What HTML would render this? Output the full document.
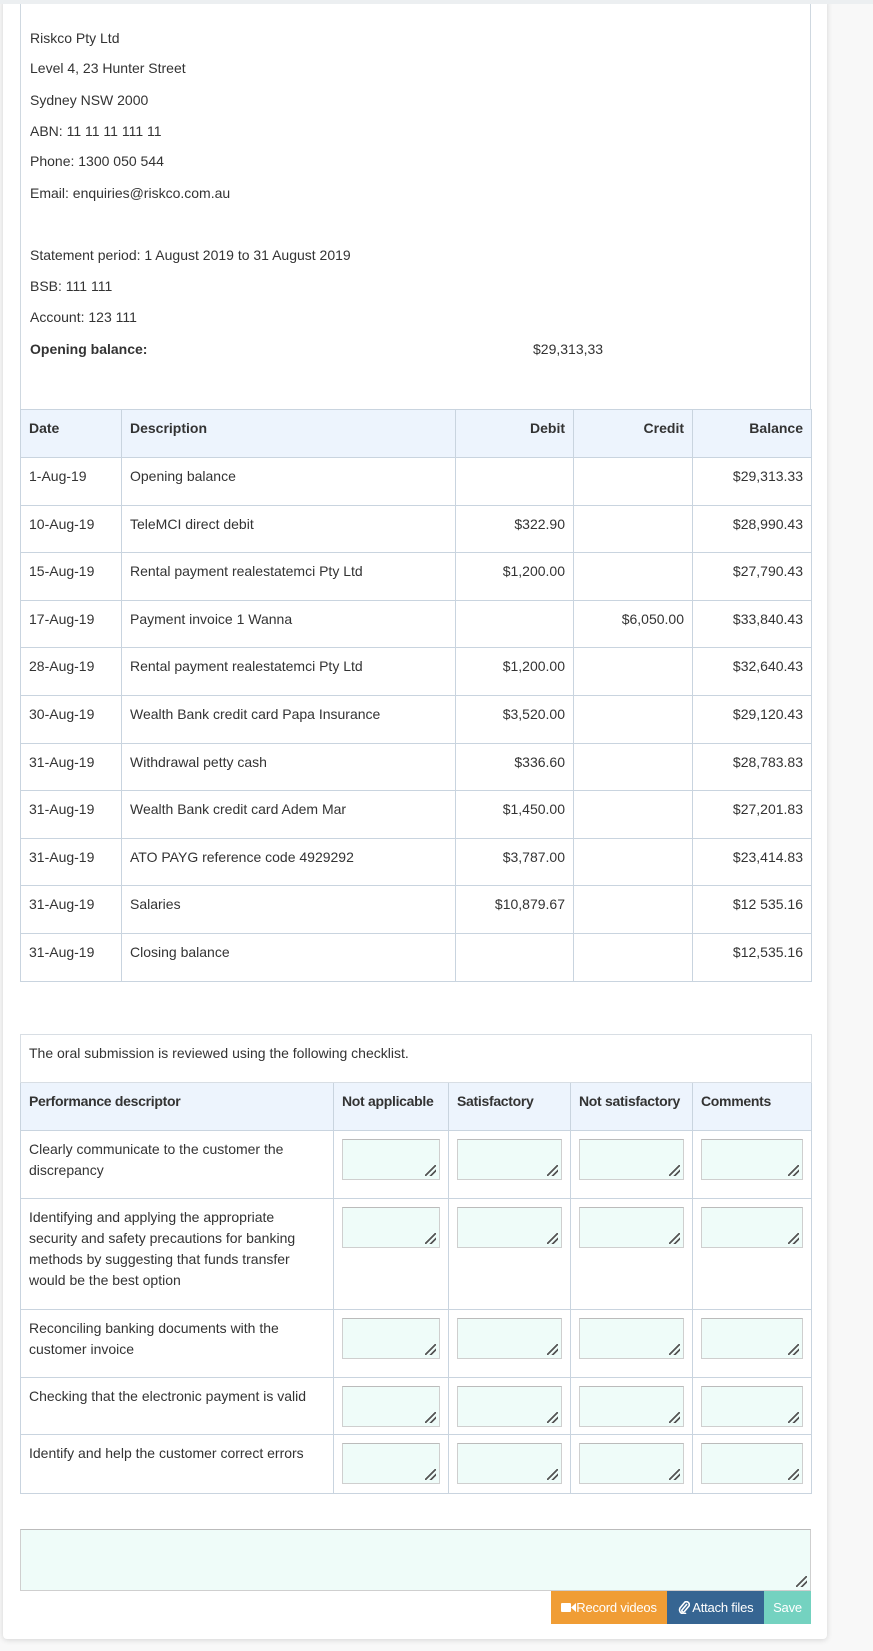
<!DOCTYPE html>
<html><head><meta charset="utf-8">
<style>
*{box-sizing:border-box;margin:0;padding:0}
html,body{width:873px;height:1651px;background:#f8f8f8;font-family:"Liberation Sans",sans-serif;font-size:14px;color:#333;overflow:hidden;position:relative}
.top{position:absolute;left:0;top:0;width:873px;height:4px;background:#eceff1;z-index:2}
.card{position:absolute;left:3px;top:0;width:824px;height:1639px;background:#fff;border-radius:0 0 4px 4px;box-shadow:0 1px 6px rgba(0,0,0,.15)}
.frame{position:absolute;left:20px;top:0;width:791px;height:410px;border-left:1px solid #cfd8e0;border-right:1px solid #cfd8e0}
.t{position:absolute;left:30px;line-height:20px}
table{position:absolute;border-collapse:collapse;table-layout:fixed}
td,th{border:1px solid #c9d4df;padding:8px 8px 0;vertical-align:top;text-align:left;font-weight:normal;line-height:20px;white-space:nowrap}
th{background:#edf4fd;font-weight:bold}
.r{text-align:right}
.tx{display:block;width:100%;height:41px;background:#effcf9;border:1px solid #cfcfcf;border-top-color:#bbb;position:relative}
.tx:after{content:"";position:absolute;right:3px;bottom:3px;width:11px;height:11px;background:linear-gradient(135deg,transparent 45%,#555 45%,#555 55%,transparent 55%, transparent 70%,#555 70%,#555 80%,transparent 80%)}
#ck td{vertical-align:top;padding-top:8px;line-height:21px;white-space:normal}
#ck th{letter-spacing:-0.3px}
.btn{position:absolute;top:1591px;height:33px;color:#fff;line-height:33px;text-align:center;font-size:13px;letter-spacing:-0.2px}
</style></head><body>
<div class="top"></div>
<div class="card"></div>
<div class="frame"></div>
<div class="t" style="top:28px">Riskco Pty Ltd</div>
<div class="t" style="top:58px">Level 4, 23 Hunter Street</div>
<div class="t" style="top:90px">Sydney NSW 2000</div>
<div class="t" style="top:121px">ABN: 11 11 11 111 11</div>
<div class="t" style="top:151px">Phone: 1300 050 544</div>
<div class="t" style="top:183px">Email: enquiries@riskco.com.au</div>
<div class="t" style="top:245px">Statement period: 1 August 2019 to 31 August 2019</div>
<div class="t" style="top:276px">BSB: 111 111</div>
<div class="t" style="top:307px">Account: 123 111</div>
<div class="t" style="top:339px;font-weight:bold">Opening balance:</div>
<div class="t" style="top:339px;left:533px">$29,313,33</div>

<table style="left:20px;top:409px;width:791px">
<colgroup><col style="width:101px"><col style="width:334px"><col style="width:118px"><col style="width:119px"><col style="width:119px"></colgroup>
<tr style="height:48px"><th>Date</th><th>Description</th><th class="r">Debit</th><th class="r">Credit</th><th class="r">Balance</th></tr>
<tr style="height:47.6px"><td>1-Aug-19</td><td>Opening balance</td><td></td><td></td><td class="r">$29,313.33</td></tr>
<tr style="height:47.6px"><td>10-Aug-19</td><td>TeleMCI direct debit</td><td class="r">$322.90</td><td></td><td class="r">$28,990.43</td></tr>
<tr style="height:47.6px"><td>15-Aug-19</td><td>Rental payment realestatemci Pty Ltd</td><td class="r">$1,200.00</td><td></td><td class="r">$27,790.43</td></tr>
<tr style="height:47.6px"><td>17-Aug-19</td><td>Payment invoice 1 Wanna</td><td></td><td class="r">$6,050.00</td><td class="r">$33,840.43</td></tr>
<tr style="height:47.6px"><td>28-Aug-19</td><td>Rental payment realestatemci Pty Ltd</td><td class="r">$1,200.00</td><td></td><td class="r">$32,640.43</td></tr>
<tr style="height:47.6px"><td>30-Aug-19</td><td>Wealth Bank credit card Papa Insurance</td><td class="r">$3,520.00</td><td></td><td class="r">$29,120.43</td></tr>
<tr style="height:47.6px"><td>31-Aug-19</td><td>Withdrawal petty cash</td><td class="r">$336.60</td><td></td><td class="r">$28,783.83</td></tr>
<tr style="height:47.6px"><td>31-Aug-19</td><td>Wealth Bank credit card Adem Mar</td><td class="r">$1,450.00</td><td></td><td class="r">$27,201.83</td></tr>
<tr style="height:47.6px"><td>31-Aug-19</td><td>ATO PAYG reference code 4929292</td><td class="r">$3,787.00</td><td></td><td class="r">$23,414.83</td></tr>
<tr style="height:47.6px"><td>31-Aug-19</td><td>Salaries</td><td class="r">$10,879.67</td><td></td><td class="r">$12 535.16</td></tr>
<tr style="height:47.6px"><td>31-Aug-19</td><td>Closing balance</td><td></td><td></td><td class="r">$12,535.16</td></tr>
</table>

<table id="ck" style="left:20px;top:1034px;width:791px">
<colgroup><col style="width:313px"><col style="width:115px"><col style="width:122px"><col style="width:122px"><col style="width:119px"></colgroup>
<tr style="height:48px"><td colspan="5" style="border-color:#d8dee4">The oral submission is reviewed using the following checklist.</td></tr>
<tr style="height:48px"><th>Performance descriptor</th><th>Not applicable</th><th>Satisfactory</th><th>Not satisfactory</th><th>Comments</th></tr>
<tr style="height:68px"><td>Clearly communicate to the customer the discrepancy</td><td><span class="tx"></span></td><td><span class="tx"></span></td><td><span class="tx"></span></td><td><span class="tx"></span></td></tr>
<tr style="height:111px"><td>Identifying and applying the appropriate security and safety precautions for banking methods by suggesting that funds transfer would be the best option</td><td><span class="tx"></span></td><td><span class="tx"></span></td><td><span class="tx"></span></td><td><span class="tx"></span></td></tr>
<tr style="height:68px"><td>Reconciling banking documents with the customer invoice</td><td><span class="tx"></span></td><td><span class="tx"></span></td><td><span class="tx"></span></td><td><span class="tx"></span></td></tr>
<tr style="height:57px"><td>Checking that the electronic payment is valid</td><td><span class="tx"></span></td><td><span class="tx"></span></td><td><span class="tx"></span></td><td><span class="tx"></span></td></tr>
<tr style="height:59px"><td>Identify and help the customer correct errors</td><td><span class="tx"></span></td><td><span class="tx"></span></td><td><span class="tx"></span></td><td><span class="tx"></span></td></tr>
</table>

<span class="tx" style="position:absolute;left:20px;top:1529px;width:791px;height:62px"></span>
<div class="btn" style="left:551px;width:116px;background:#f09d35"><svg width="15" height="11" viewBox="0 0 15 11" style="vertical-align:-1px"><rect x="0" y="1" width="10" height="9" rx="1" fill="#fff"/><path d="M10 5.5L15 1V10Z" fill="#fff"/></svg>Record videos</div>
<div class="btn" style="left:667px;width:97px;background:#366592"><svg width="12" height="13" viewBox="0 0 12 13" style="vertical-align:-2px"><path d="M9 3L4 9a1.5 1.5 0 0 0 2 2l5-6a3 3 0 0 0-4-4L2 7a4 4 0 0 0 6 5" fill="none" stroke="#fff" stroke-width="1.6"/></svg> Attach files</div>
<div class="btn" style="left:764px;width:47px;background:#74d2c0">Save</div>
</body></html>
